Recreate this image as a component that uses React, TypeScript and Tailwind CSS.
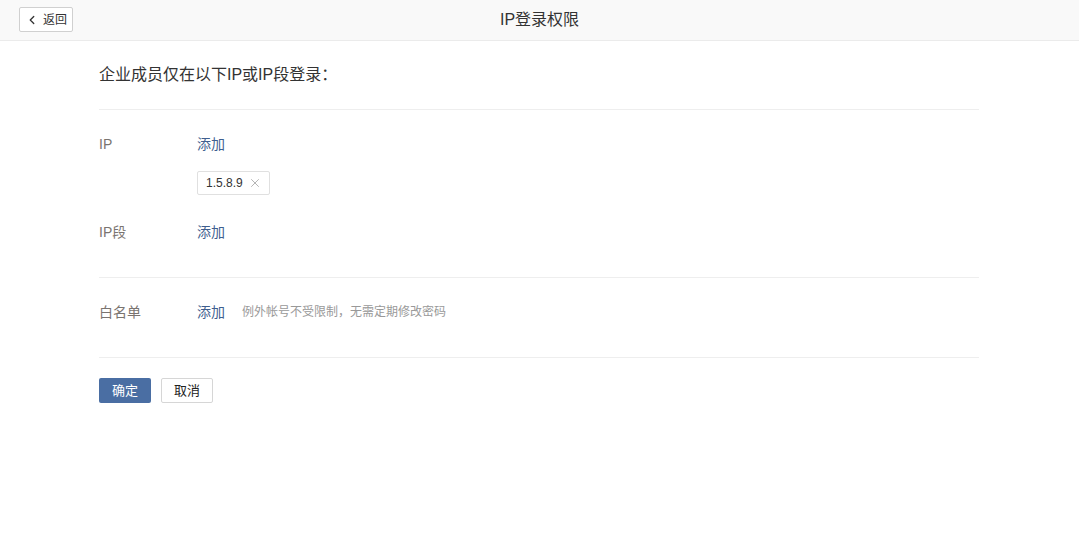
import { ChevronLeft, X } from "lucide-react";
import type { ReactNode } from "react";

const font = {
  fontFamily: '"Liberation Sans", "Noto Sans CJK SC", sans-serif',
};

export default function App() {
  return (
    <div className="min-h-[540px] bg-white text-[#333]" style={font}>
      {/* Header */}
      <div className="relative flex h-[41px] items-center justify-center border-b border-[#ebebeb] bg-[#f9f9f9]">
        <button className="absolute left-[19px] top-[7px] flex h-[25px] w-[54px] items-center justify-center gap-1 rounded-[2px] border border-[#d0d0d0] bg-white text-[12px] text-[#333]">
          <ChevronLeft className="h-3.5 w-3.5" strokeWidth={2.25} />
          返回
        </button>
        <span className="text-[16px] text-[#333]">IP登录权限</span>
      </div>

      <div className="ml-[99px] w-[880px]">
        <div className="flex h-[69px] items-center border-b border-[#eee] text-[16px] text-[#333]">
          企业成员仅在以下IP或IP段登录：
        </div>

        {/* IP section */}
        <div className="flex flex-col border-b border-[#eee] pb-[35px] pt-[24px]">
          <Row label="IP">
            <Link>添加</Link>
          </Row>
          <div className="ml-[98px] mt-[16px]">
            <span className="inline-flex h-[24px] items-center gap-[5px] rounded-[2px] border border-[#e0e0e0] pl-[8px] pr-[7px] text-[12px] text-[#333]">
              1.5.8.9
              <X className="h-[14px] w-[14px] text-[#999]" strokeWidth={1.25} />
            </span>
          </div>
          <div className="mt-[27px]">
            <Row label="IP段">
              <Link>添加</Link>
            </Row>
          </div>
        </div>

        {/* Whitelist */}
        <div className="border-b border-[#eee] pb-[35px] pt-[24px]">
          <Row label="白名单">
            <Link>添加</Link>
            <span className="ml-[17px] text-[12px] text-[#999]">
              例外帐号不受限制，无需定期修改密码
            </span>
          </Row>
        </div>

        <div className="flex gap-[10px] pt-[20px]">
          <button className="h-[25px] w-[52px] rounded-[2px] bg-[#4a6ea3] text-[13px] text-white">
            确定
          </button>
          <button className="h-[25px] w-[52px] rounded-[2px] border border-[#d6d6d6] bg-white text-[13px] text-[#222]">
            取消
          </button>
        </div>
      </div>
    </div>
  );
}

function Row({ label, children }: { label: string; children: ReactNode }) {
  return (
    <div className="flex h-[20px] items-center">
      <span className="w-[98px] shrink-0 text-[14px] text-[#7a7470]">{label}</span>
      <div className="flex items-center">{children}</div>
    </div>
  );
}

function Link({ children }: { children: ReactNode }) {
  return <span className="cursor-pointer text-[14px] text-[#3f5f8f]">{children}</span>;
}
